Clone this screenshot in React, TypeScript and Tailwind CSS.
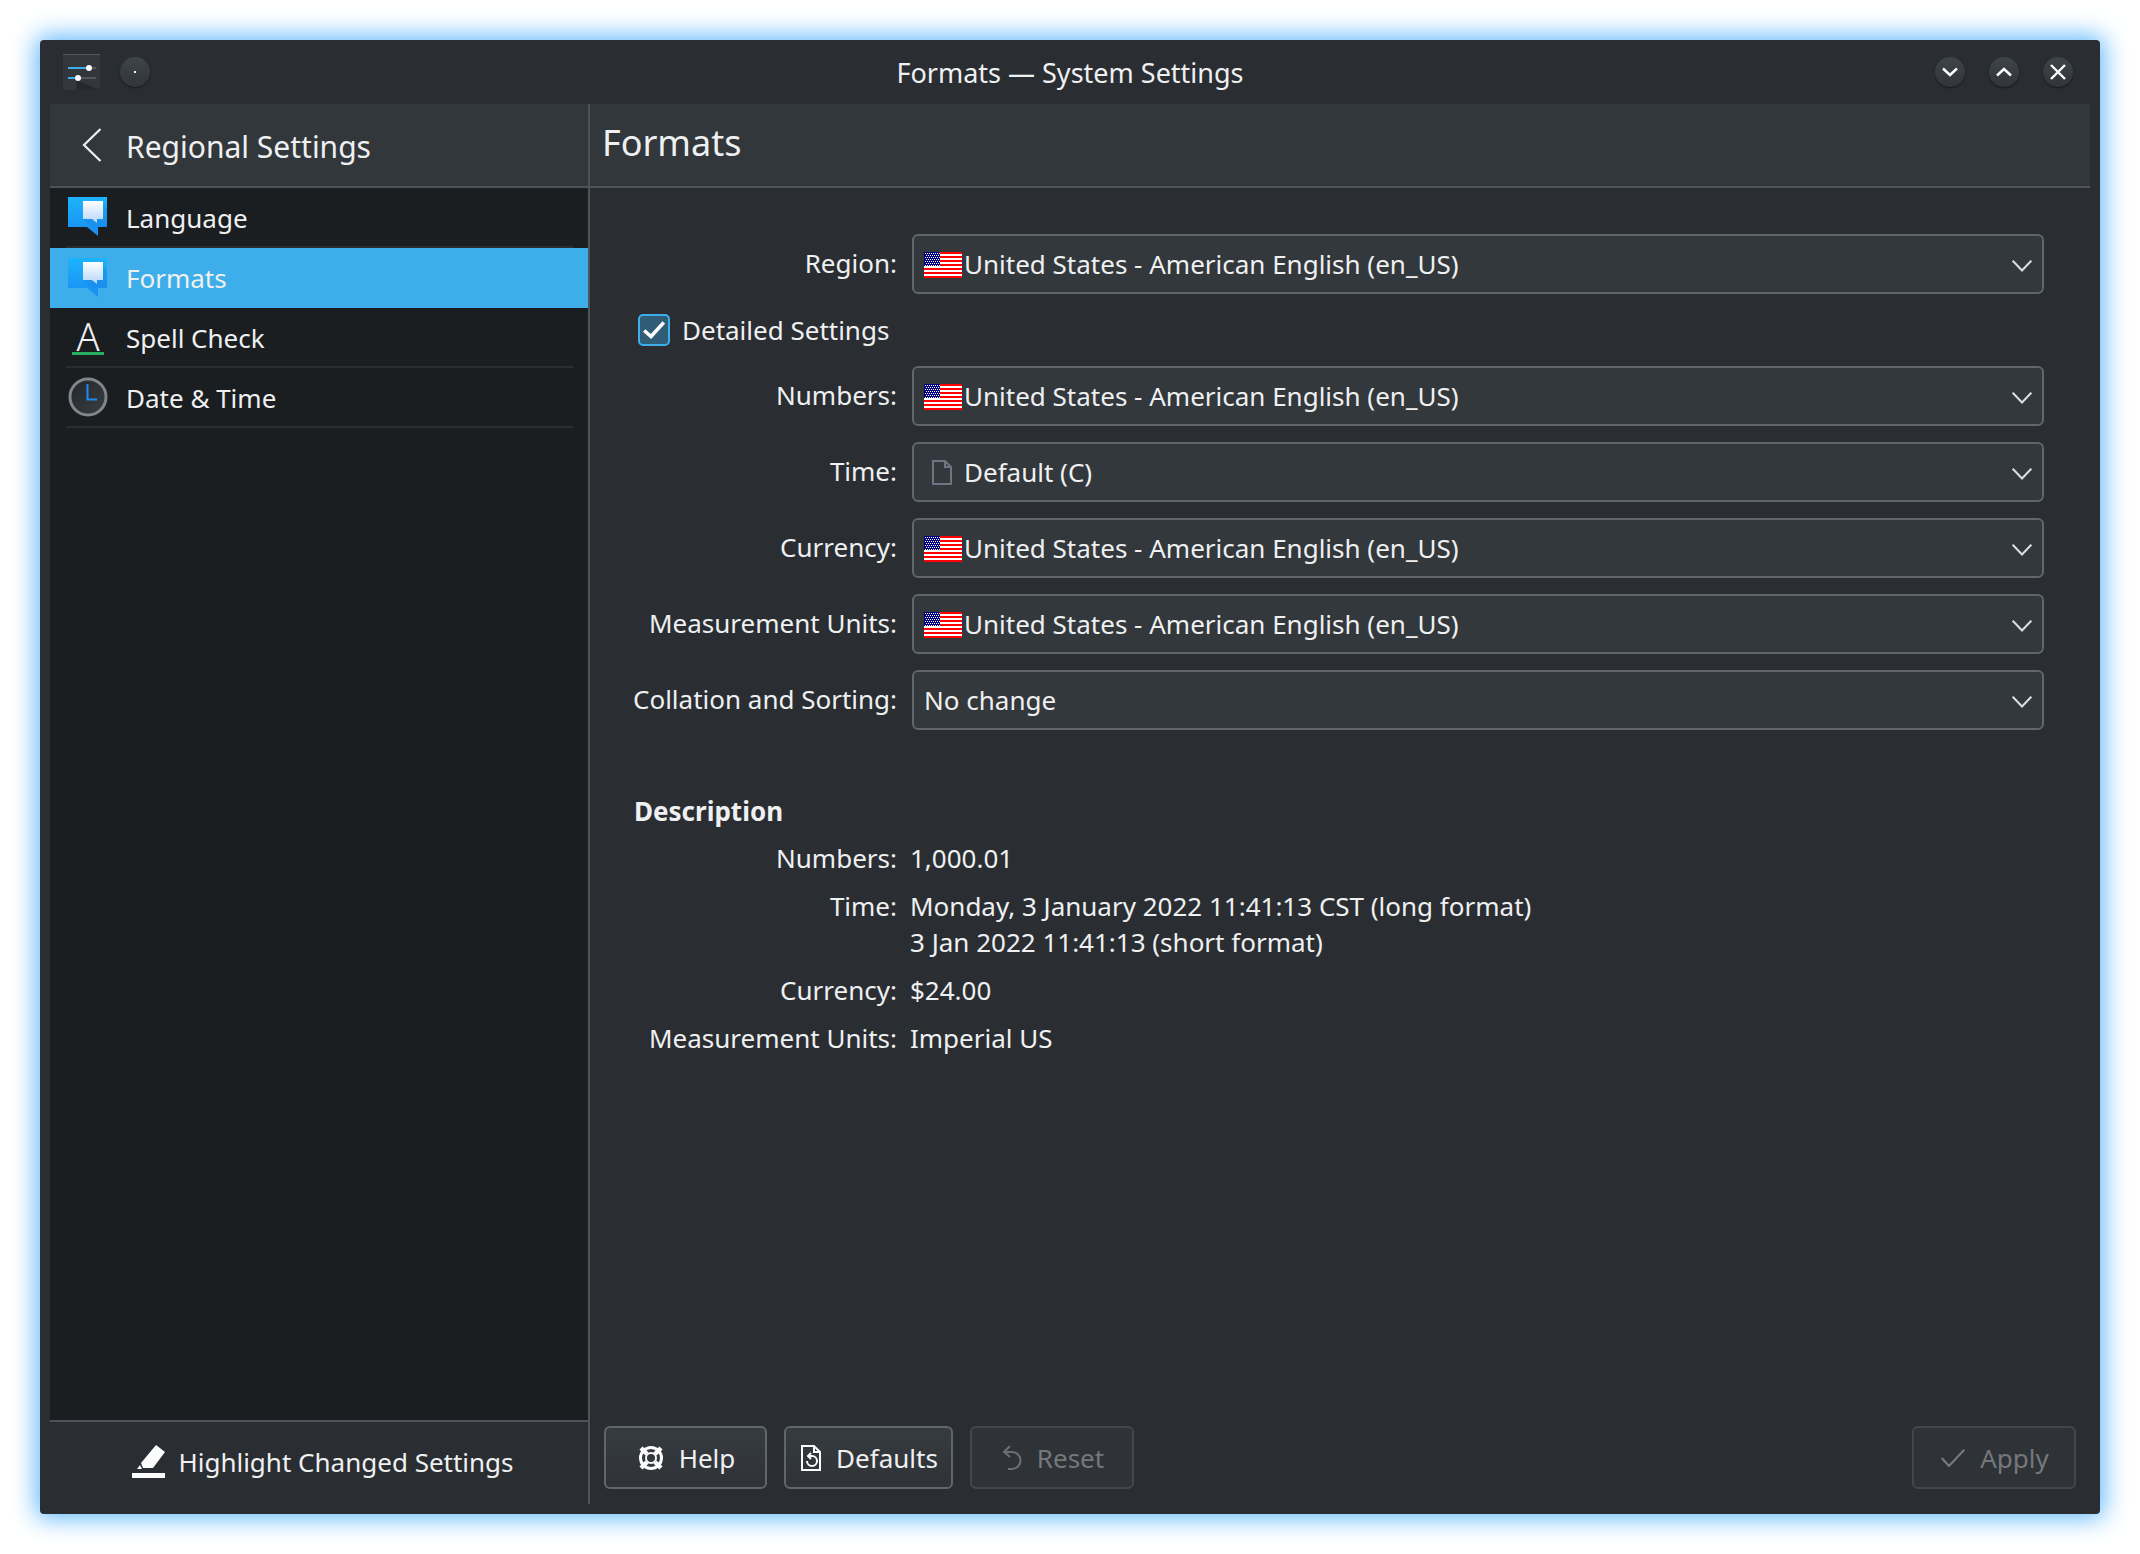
import React from "react";

const enUS = "United States - American English (en_US)";

function Flag() {
  const stripes = [0, 4, 8, 12, 16, 20, 24];
  const dots: [number, number][] = [];
  for (let y = 1; y < 14; y += 2) for (let x = 1; x < 16; x += 2) dots.push([x + (y % 4 === 1 ? 0 : 1), y]);
  return (
    <svg width="38" height="26" viewBox="0 0 38 26" shapeRendering="crispEdges" className="mt-[2px] shrink-0">
      <rect width="38" height="26" fill="#fff" />
      {stripes.map((y) => (
        <rect key={y} x="0" y={y} width="38" height="2" fill="#f00" />
      ))}
      <rect width="16" height="14" fill="#000080" />
      {dots.map(([x, y]) => (
        <rect key={`${x}-${y}`} x={x} y={y} width="1" height="1" fill="#fff" />
      ))}
    </svg>
  );
}

function Chevron() {
  return (
    <svg width="20" height="12" viewBox="0 0 20 12" fill="none" stroke="#dcdedf" strokeWidth="2" className="mt-[3px] shrink-0">
      <path d="M0.7 0.7 L10 10.5 L19.3 0.7" />
    </svg>
  );
}

function Combo({ children }: { children: React.ReactNode }) {
  return (
    <div className="flex h-[60px] w-[1132px] items-center rounded-[6px] border-2 border-[#61666a] bg-[#33383c] pr-[10px]">
      <div className="flex flex-1 items-center pl-[10px]">{children}</div>
      <Chevron />
    </div>
  );
}

function Locale() {
  return (
    <Combo>
      <Flag />
      <span className="ml-[2px]">{enUS}</span>
    </Combo>
  );
}

function FormRow({ label, children }: { label: string; children: React.ReactNode }) {
  return (
    <div className="flex items-center gap-[15px]">
      <div className="w-[264px] whitespace-nowrap pb-[2px] text-right">{label}</div>
      {children}
    </div>
  );
}

function InfoRow({ label, children }: { label: string; children: React.ReactNode }) {
  return (
    <div className="flex items-start gap-[13px]">
      <div className="w-[264px] whitespace-nowrap text-right">{label}</div>
      <div>{children}</div>
    </div>
  );
}

function BubbleIcon() {
  return (
    <svg width="40" height="40" viewBox="0 0 40 40" className="shrink-0">
      <defs>
        <linearGradient id="bub" x1="0" y1="0" x2="0" y2="1">
          <stop offset="0" stopColor="#1cb4fb" />
          <stop offset="1" stopColor="#1a8cf2" />
        </linearGradient>
        <linearGradient id="bubw" x1="0" y1="0" x2="0" y2="1">
          <stop offset="0" stopColor="#ffffff" />
          <stop offset="1" stopColor="#b4d4fa" />
        </linearGradient>
      </defs>
      <path d="M0 0 H39 V30 H30 V39 L19 30 H0 Z" fill="url(#bub)" />
      <path d="M15 22 L23 30 H39 V12 L35 8 Z" fill="#1a80e0" opacity="0.35" />
      <path d="M15 4 H35 V22 H29 V26 L24 22 H15 Z" fill="url(#bubw)" />
    </svg>
  );
}

function ClockIcon() {
  return (
    <svg width="40" height="40" viewBox="0 0 40 40" className="shrink-0">
      <defs>
        <linearGradient id="clk" x1="0" y1="0" x2="1" y2="1">
          <stop offset="0" stopColor="#22262a" />
          <stop offset="1" stopColor="#3a3f44" />
        </linearGradient>
      </defs>
      <circle cx="20" cy="20" r="18" fill="url(#clk)" stroke="#80868a" strokeWidth="3" />
      <path d="M19.5 7 V22.5 H29" fill="none" stroke="#1d8cf0" strokeWidth="2" />
    </svg>
  );
}

function SideRow({ icon, label, selected, line }: { icon: React.ReactNode; label: string; selected?: boolean; line?: boolean }) {
  return (
    <div className={selected ? "flex h-[60px] flex-col bg-[#3daee9]" : "flex h-[60px] flex-col"}>
      <div className="flex flex-1 items-center pl-[18px]">
        <div className="flex w-[58px] shrink-0">{icon}</div>
        <span className={selected ? "" : "pt-[2px]"}>{label}</span>
      </div>
      {line ? <div className="ml-4 mr-[15px] h-[2px] bg-[#2a2d30]" /> : null}
    </div>
  );
}

function RoundButton({ children }: { children: React.ReactNode }) {
  return (
    <div className="flex h-[30px] w-[30px] items-center justify-center rounded-full bg-gradient-to-b from-[#3f444a] to-[#31353a] shadow-[0_1px_2px_rgba(0,0,0,0.5)]">
      {children}
    </div>
  );
}

function FooterButton({ icon, label, width, disabled }: { icon: React.ReactNode; label: string; width: string; disabled?: boolean }) {
  return (
    <div
      className={
        (disabled
          ? "border-[#42474b] bg-[#2f3337] text-[#74787b] "
          : "border-[#61666a] bg-gradient-to-b from-[#363b40] to-[#2f3337] ") +
        width +
        " flex h-[63px] items-center justify-center gap-[15px] rounded-[6px] border-2 pl-[2px]"
      }
    >
      {icon}
      <span>{label}</span>
    </div>
  );
}

export default function App() {
  return (
    <div className="h-[1554px] w-[2140px] bg-white p-10 font-['Noto_Sans',sans-serif] text-[26px] leading-9 text-[#eff0f1]">
      <div className="flex h-[1474px] w-[2060px] flex-col rounded-[4px] bg-[#2a2e32] shadow-[0_0_24px_4px_#60b8fb]">
        {/* title bar */}
        <div className="relative flex h-16 items-center pl-[23px] pr-[27px]">
          <svg width="37" height="36" viewBox="0 0 37 36" className="shrink-0">
            <rect width="37" height="36" fill="#33373b" />
            <path d="M0 0 H37 V1 H0 Z" fill="#54595e" />
            <path d="M13 26 L37 36 H14 Z" fill="#26292c" />
            <path d="M5 14 H26" stroke="#3daee9" strokeWidth="2" />
            <path d="M27 14 H33" stroke="#55595d" strokeWidth="2" />
            <circle cx="26" cy="14" r="3" fill="#fcfcfc" />
            <path d="M5 24 H15" stroke="#3daee9" strokeWidth="2" />
            <path d="M16 24 H33" stroke="#55595d" strokeWidth="2" />
            <circle cx="15" cy="24" r="3" fill="#fcfcfc" />
          </svg>
          <div className="ml-5">
            <RoundButton>
              <div className="h-[2px] w-[2px] bg-white" />
            </RoundButton>
          </div>
          <div className="absolute inset-x-0 top-[15px] text-center text-[27px]">Formats — System Settings</div>
          <div className="ml-auto flex gap-6">
            <RoundButton>
              <svg width="16" height="10" viewBox="0 0 16 10" fill="none" stroke="#fcfcfc" strokeWidth="2.4">
                <path d="M1 1.5 L8 8 L15 1.5" />
              </svg>
            </RoundButton>
            <RoundButton>
              <svg width="16" height="10" viewBox="0 0 16 10" fill="none" stroke="#fcfcfc" strokeWidth="2.4">
                <path d="M1 8.5 L8 2 L15 8.5" />
              </svg>
            </RoundButton>
            <RoundButton>
              <svg width="16" height="16" viewBox="0 0 16 16" fill="none" stroke="#fcfcfc" strokeWidth="2.4">
                <path d="M1 1 L15 15 M15 1 L1 15" />
              </svg>
            </RoundButton>
          </div>
        </div>

        {/* body */}
        <div className="flex flex-1 px-[10px] pb-[10px]">
          <div className="flex w-[538px] flex-col">
            <div className="flex h-[84px] shrink-0 items-center border-b-2 border-[#4d5356] bg-[#32373b] pl-[32px] text-[30px]">
              <svg width="20" height="34" viewBox="0 0 20 34" fill="none" stroke="#eff0f1" strokeWidth="2.2" className="shrink-0">
                <path d="M18.5 1 L2 17 L18.5 33" />
              </svg>
              <span className="ml-[24px] pt-1">Regional Settings</span>
            </div>
            <div className="flex-1 bg-[#1b1e20]">
              <SideRow icon={<BubbleIcon />} label="Language" line />
              <SideRow icon={<BubbleIcon />} label="Formats" selected />
              <SideRow
                icon={
                  <div className="flex w-10 flex-col items-center">
                    <span className="text-[38px] font-light leading-[32px]">A</span>
                    <div className="h-[3px] w-8 bg-[#27ae60]" />
                  </div>
                }
                label="Spell Check"
                line
              />
              <SideRow icon={<ClockIcon />} label="Date & Time" line />
            </div>
            <div className="flex h-[84px] shrink-0 items-center justify-center gap-[13px] border-t-2 border-[#4d5356] pb-[3px] pl-2">
              <svg width="33" height="33" viewBox="0 0 33 33" fill="#fcfcfc" className="shrink-0">
                <path d="M24 0 L33 7 L21 23 H11 L9 18 Z" />
                <path d="M8 20 L10 24 H5 Z" />
                <rect x="0" y="28" width="33" height="5" />
              </svg>
              <span>Highlight Changed Settings</span>
            </div>
          </div>

          <div className="w-[2px] bg-[#4d5356]" />

          <div className="flex flex-1 flex-col">
            <div className="flex h-[84px] shrink-0 items-center border-b-2 border-[#4d5356] bg-[#32373b] pb-[5px] pl-3 text-[36px]">
              Formats
            </div>
            <div className="flex flex-1 flex-col pl-[43px] pr-[46px] pt-[46px]">
              <FormRow label="Region:">
                <Locale />
              </FormRow>
              <div className="my-5 flex h-8 items-center pl-[5px]">
                <div className="flex h-8 w-8 items-center justify-center rounded-[5px] border-2 border-[#3daee9] bg-[#2f5d78]">
                  <svg width="22" height="18" viewBox="0 0 22 18" fill="none" stroke="#fcfcfc" strokeWidth="3.6">
                    <path d="M1.2 9.5 L8 15.5 L20.8 1.5" />
                  </svg>
                </div>
                <span className="ml-3">Detailed Settings</span>
              </div>
              <div className="flex flex-col gap-4">
                <FormRow label="Numbers:">
                  <Locale />
                </FormRow>
                <FormRow label="Time:">
                  <Combo>
                    <svg width="20" height="25" viewBox="0 0 20 25" fill="none" stroke="#6b7683" strokeWidth="2" className="ml-[8px] shrink-0">
                      <path d="M1 1 H13 L19 7 V24 H1 Z M13 1 V7 H19" />
                    </svg>
                    <span className="ml-3">Default (C)</span>
                  </Combo>
                </FormRow>
                <FormRow label="Currency:">
                  <Locale />
                </FormRow>
                <FormRow label="Measurement Units:">
                  <Locale />
                </FormRow>
                <FormRow label="Collation and Sorting:">
                  <Combo>
                    <span>No change</span>
                  </Combo>
                </FormRow>
              </div>

              <div className="mt-[63px] pl-[1px] font-bold">Description</div>
              <div className="mt-[11px] flex flex-col gap-3">
                <InfoRow label="Numbers:">1,000.01</InfoRow>
                <InfoRow label="Time:">
                  <div>Monday, 3 January 2022 11:41:13 CST (long format)</div>
                  <div>3 Jan 2022 11:41:13 (short format)</div>
                </InfoRow>
                <InfoRow label="Currency:">$24.00</InfoRow>
                <InfoRow label="Measurement Units:">Imperial US</InfoRow>
              </div>

              <div className="-ml-[29px] -mr-[32px] mb-[15px] mt-auto flex gap-[17px]">
                <FooterButton
                  width="w-[163px]"
                  label="Help"
                  icon={
                    <svg width="26" height="26" viewBox="0 0 26 26" fill="none" stroke="#fcfcfc" strokeWidth="3" className="shrink-0">
                      <circle cx="13" cy="13" r="10.5" />
                      <circle cx="13" cy="13" r="5" strokeWidth="2" />
                      <path d="M3 3 L9 9 M23 3 L17 9 M3 23 L9 17 M23 23 L17 17" strokeWidth="4.5" />
                    </svg>
                  }
                />
                <FooterButton
                  width="w-[169px]"
                  label="Defaults"
                  icon={
                    <svg width="20" height="26" viewBox="0 0 20 26" fill="none" stroke="#fcfcfc" strokeWidth="2" className="shrink-0">
                      <path d="M1 1 H13 L19 7 V25 H1 Z M13 1 V7 H19" />
                      <path d="M6 16 A5 5 0 1 0 11 11 H8 M10 8 L7 11 L10 14" fill="none" />
                    </svg>
                  }
                />
                <FooterButton
                  width="w-[164px]"
                  label="Reset"
                  disabled
                  icon={
                    <svg width="20" height="26" viewBox="0 0 20 26" fill="none" stroke="#6c7073" strokeWidth="2" className="shrink-0">
                      <path d="M8 1 L2 7 L8 12 M2 7 H10 A8 8 0 0 1 10 24 H6" />
                    </svg>
                  }
                />
                <div className="ml-auto">
                  <FooterButton
                    width="w-[164px]"
                    label="Apply"
                    disabled
                    icon={
                      <svg width="24" height="18" viewBox="0 0 24 18" fill="none" stroke="#787c7f" strokeWidth="2" className="shrink-0">
                        <path d="M0.7 9 L8 17 L23.3 0.7" />
                      </svg>
                    }
                  />
                </div>
              </div>
            </div>
          </div>
        </div>
      </div>
    </div>
  );
}
